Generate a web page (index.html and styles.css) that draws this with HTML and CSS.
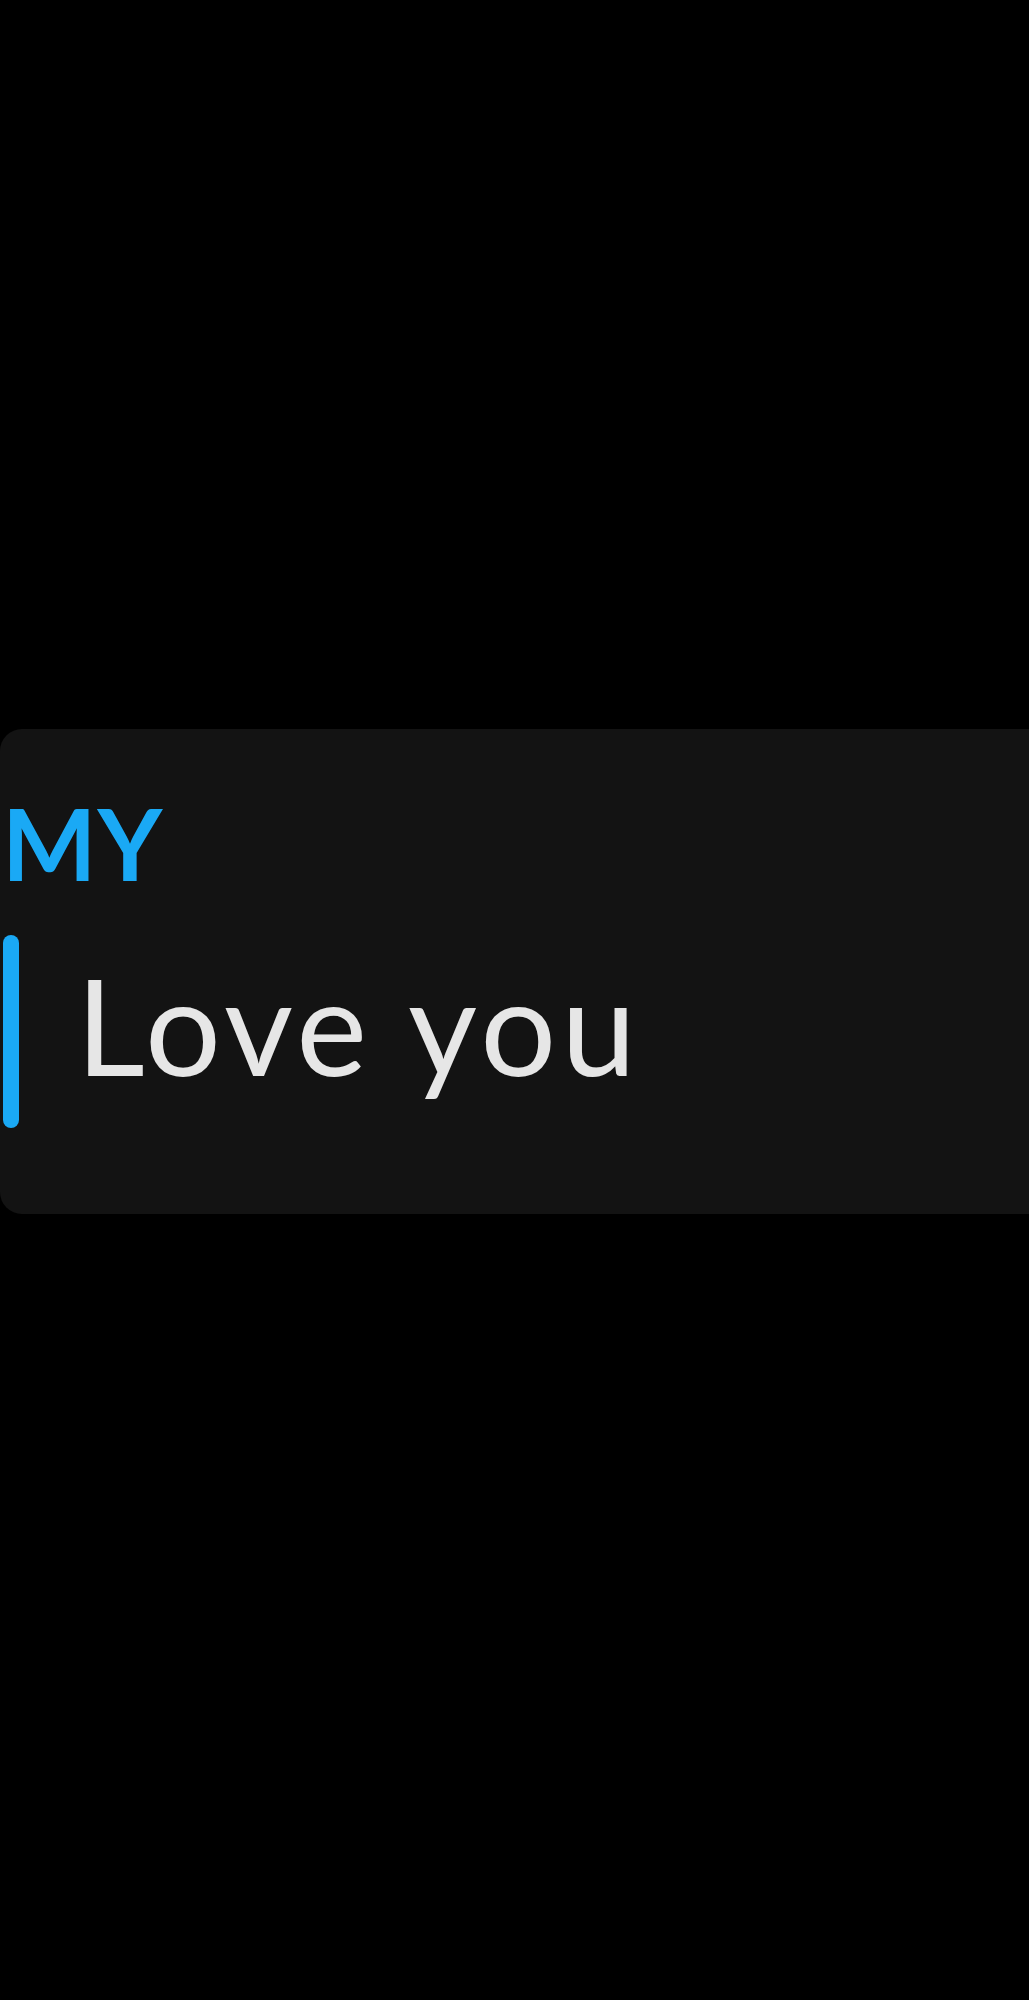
FILE: index.html
```html
<!DOCTYPE html>
<html>
<head>
<meta charset="utf-8">
<link rel="stylesheet" href="styles.css">
</head>
<body>
<div class="screen">
  <div class="card">
    <div class="label">MY</div>
    <div class="quote">
      <div class="bar"></div>
      <div class="text">Love you</div>
    </div>
  </div>
</div>
</body>
</html>
```

FILE: styles.css
```css
html, body {
  margin: 0;
  padding: 0;
  background: #000;
}
.screen {
  width: 1029px;
  height: 2000px;
  padding-top: 729px;
  box-sizing: border-box;
  overflow: hidden;
}
.card {
  height: 485px;
  background: #131313;
  border-radius: 22px 0 0 22px;
  box-sizing: border-box;
  padding-top: 63px;
}
.label {
  font-family: "Lato", "Liberation Sans", sans-serif;
  font-weight: 700;
  font-size: 100px;
  line-height: 1;
  color: #1aa9f5;
  padding-left: 2px;
  letter-spacing: 1px;
}
.quote {
  display: flex;
  align-items: flex-start;
  margin-top: 43px;
}
.bar {
  width: 16px;
  height: 193px;
  background: #1aa9f5;
  border-radius: 8px;
  margin-left: 3px;
  flex: none;
}
.text {
  font-family: "Lato", "Liberation Sans", sans-serif;
  font-weight: 400;
  font-size: 134px;
  line-height: 1;
  letter-spacing: 5px;
  color: #e6e6e6;
  margin-left: 57px;
  margin-top: 23px;
}
```
